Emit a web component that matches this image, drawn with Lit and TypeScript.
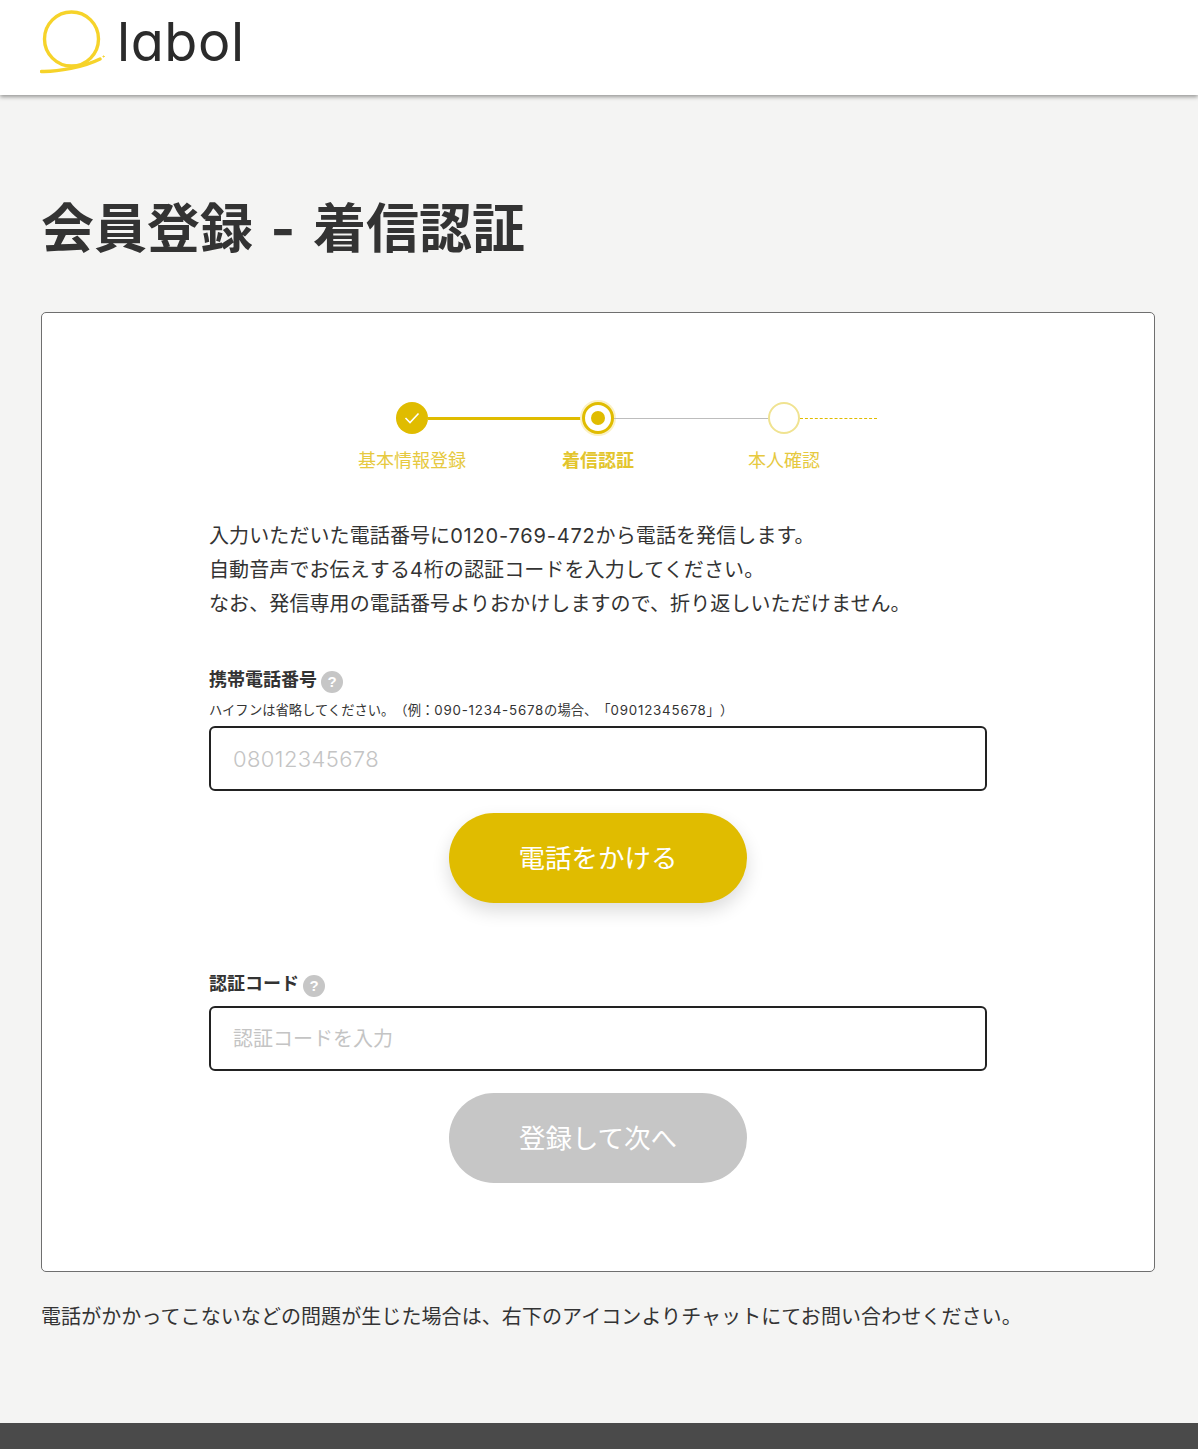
import { LitElement, html, css } from "lit";
import { customElement } from "lit/decorators.js";

const help = html`<span class="help">?</span>`;

@customElement("app-root")
export class AppRoot extends LitElement {
  static styles = css`
    :host {
      display: block;
      background: #f4f4f3;
      color: #333;
      font-family: "Inter", "Noto Sans CJK JP", "Liberation Sans", sans-serif;
      text-spacing-trim: space-all;
    }
    .header {
      height: 95px;
      box-sizing: border-box;
      padding-left: 40px;
      display: flex;
      align-items: flex-start;
      background: #fff;
      box-shadow: 0 2px 4px rgba(0, 0, 0, 0.38);
      position: relative;
    }
    .logo-mark {
      display: block;
      margin-top: 9px;
      flex: none;
    }
    .logo-text {
      margin: 8px 0 0 11px;
      font: 400 54px/68px "Inter", "Lato", sans-serif;
      font-feature-settings: "cv11" 1;
      letter-spacing: 0.6px;
      color: #2b2b2b;
    }
    main {
      padding: 0 43px 0 41px;
    }
    h1 {
      margin: 0;
      padding-top: 94px;
      height: 123px;
      font-size: 53px;
      line-height: 80px;
      font-weight: 700;
      word-spacing: 5px;
      color: #333;
    }
    .card {
      background: #fff;
      border: 1px solid #6f6f6f;
      border-radius: 5px;
      height: 960px;
      box-sizing: border-box;
      padding-top: 89px;
    }
    .steps {
      width: 558px;
      margin: 0 auto;
    }
    .track {
      display: flex;
      align-items: center;
      padding-left: 77px;
      height: 32px;
    }
    .dot {
      flex: none;
      width: 32px;
      height: 32px;
      box-sizing: border-box;
      border-radius: 50%;
      display: flex;
      align-items: center;
      justify-content: center;
    }
    .dot.done {
      background: #e0bc00;
    }
    .dot.now {
      border: 3px solid #e0bc00;
      box-shadow: 0 0 0 2px #fbf1c4;
      background: #fff;
    }
    .dot.now::after {
      content: "";
      width: 14px;
      height: 14px;
      border-radius: 50%;
      background: #e0bc00;
    }
    .dot.next {
      border: 2px solid #f0e391;
    }
    .bar {
      width: 154px;
      height: 0;
      border-top: 1px solid #bdbdbd;
    }
    .bar.on {
      border-top: 3px solid #e0bc00;
    }
    .bar.dash {
      width: 77px;
      border-top: 1px dashed #e0bc00;
    }
    .labels {
      display: grid;
      grid-template-columns: repeat(3, 186px);
      margin-top: 14px;
      font-size: 18px;
      line-height: 26px;
      text-align: center;
      color: #e6c940;
    }
    .labels .cur {
      font-weight: 700;
      color: #e3c52c;
    }
    .form {
      width: 778px;
      margin: 45px auto 0;
    }
    .lead {
      margin: 0;
      font-size: 20px;
      line-height: 34px;
      letter-spacing: 0.1px;
      color: #333;
    }
    .n {
      letter-spacing: 0.04em;
    }
    .label {
      display: flex;
      align-items: center;
      font-size: 18px;
      line-height: 26px;
      font-weight: 700;
      color: #333;
    }
    .label.phone {
      margin-top: 46px;
    }
    .label.code {
      margin-top: 68px;
    }
    .help {
      width: 22px;
      height: 22px;
      margin: 3px 0 0 4px;
      border-radius: 50%;
      background: #c6c6c6;
      color: #fff;
      font: 700 15px/22px "Liberation Sans", sans-serif;
      text-align: center;
    }
    .hint {
      margin: 7px 0 6px;
      font-size: 13.3px;
      line-height: 20px;
      color: #333;
    }
    .hint .n {
      letter-spacing: 0.06em;
    }
    .code + input {
      margin-top: 9px;
    }
    input {
      display: block;
      width: 100%;
      height: 65px;
      box-sizing: border-box;
      padding: 0 22px;
      border: 2px solid #222;
      border-radius: 6px;
      background: #fff;
      font-family: inherit;
      outline: none;
    }
    input.num {
      font-size: 22px;
      font-weight: 300;
      letter-spacing: 0.4px;
    }
    input.txt {
      font-size: 20px;
    }
    input::placeholder {
      color: #c4c4c4;
      opacity: 1;
    }
    .btn {
      display: block;
      width: 298px;
      height: 90px;
      margin: 22px auto 0;
      padding: 0 0 4px;
      border: none;
      border-radius: 45px;
      background: #e0bc00;
      color: #fff;
      font-family: inherit;
      font-size: 26.5px;
      box-shadow: 0 8px 18px rgba(0, 0, 0, 0.14);
    }
    .btn:disabled {
      background: #c6c6c6;
      box-shadow: none;
    }
    .note {
      margin: 0;
      padding-top: 29px;
      height: 151px;
      box-sizing: border-box;
      font-size: 20px;
      line-height: 32px;
      letter-spacing: 0.08px;
      color: #333;
    }
    .foot {
      height: 26px;
      background: #4a4a4a;
    }
  `;

  render() {
    return html`
      <header class="header">
        <svg class="logo-mark" width="66" height="66" viewBox="0 0 66 66" fill="none" stroke="#f6d32a" stroke-width="3.4" stroke-linecap="round">
          <circle cx="31.5" cy="30" r="27" />
          <path d="M1.5 62.5C18 63 44 58 60 50" />
          <circle cx="63.5" cy="47.5" r="0.6" stroke-width="1" />
        </svg>
        <span class="logo-text">labol</span>
      </header>
      <main>
        <h1>会員登録 - 着信認証</h1>
        <section class="card">
          <div class="steps">
            <div class="track">
              <span class="dot done">
                <svg width="16" height="12" viewBox="0 0 16 12" fill="none" stroke="#fff" stroke-width="1.6">
                  <path d="M1.5 6l4.5 4.5L14.5 1.5" />
                </svg>
              </span>
              <span class="bar on"></span>
              <span class="dot now"></span>
              <span class="bar"></span>
              <span class="dot next"></span>
              <span class="bar dash"></span>
            </div>
            <div class="labels">
              <span>基本情報登録</span>
              <span class="cur">着信認証</span>
              <span>本人確認</span>
            </div>
          </div>
          <div class="form">
            <p class="lead">
              入力いただいた電話番号に<span class="n">0120-769-472</span>から電話を発信します。<br />
              自動音声でお伝えする<span class="n">4</span>桁の認証コードを入力してください。<br />
              なお、発信専用の電話番号よりおかけしますので、折り返しいただけません。
            </p>
            <div class="label phone">携帯電話番号${help}</div>
            <p class="hint">ハイフンは省略してください。（例：<span class="n">090-1234-5678</span>の場合、「<span class="n">09012345678</span>」）</p>
            <input class="num" placeholder="08012345678" />
            <button class="btn">電話をかける</button>
            <div class="label code">認証コード${help}</div>
            <input class="txt" placeholder="認証コードを入力" />
            <button class="btn" disabled>登録して次へ</button>
          </div>
        </section>
        <p class="note">電話がかかってこないなどの問題が生じた場合は、右下のアイコンよりチャットにてお問い合わせください。</p>
      </main>
      <div class="foot"></div>
    `;
  }
}
